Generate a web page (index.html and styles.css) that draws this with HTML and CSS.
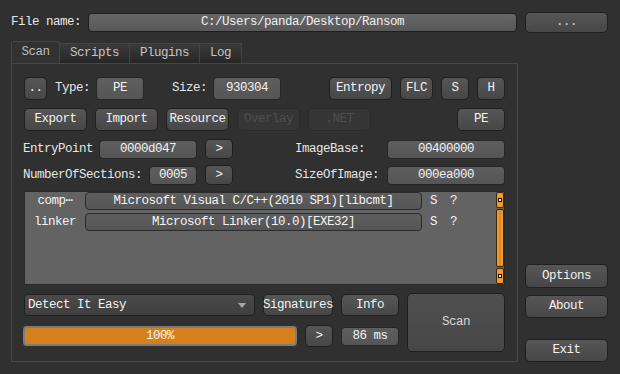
FILE: index.html
```html
<!DOCTYPE html>
<html>
<head>
<meta charset="utf-8">
<link rel="stylesheet" href="styles.css">
</head>
<body>
<div class="app">
  <div class="top">
    <span class="lbl fn-lbl">File name:</span>
    <div class="fname">C:/Users/panda/Desktop/Ransom</div>
  </div>
  <div class="top-side"><button class="btn dots">...</button></div>

  <div class="left">
    <div class="tabs">
      <div class="tab active">Scan</div>
      <div class="tab">Scripts</div>
      <div class="tab">Plugins</div>
      <div class="tab">Log</div>
    </div>
    <div class="panel">
      <div class="row r1">
        <button class="btn w23">..</button>
        <span class="lbl ml8">Type:</span>
        <div class="val w48 ml6 h23">PE</div>
        <span class="lbl ml28">Size:</span>
        <div class="val w68 ml6 h23">930304</div>
        <button class="btn w63 mlauto">Entropy</button>
        <button class="btn w33">FLC</button>
        <button class="btn w28">S</button>
        <button class="btn w28">H</button>
      </div>
      <div class="row r2">
        <button class="btn w63">Export</button>
        <button class="btn w63">Import</button>
        <button class="btn w63">Resource</button>
        <button class="btn w63 off">Overlay</button>
        <button class="btn w63 off">.NET</button>
        <button class="btn w48 mlauto">PE</button>
      </div>
      <div class="row r3">
        <div class="half">
          <span class="lbl">EntryPoint</span>
          <div class="val f w98 mlauto">0000d047</div>
          <button class="btn arrow">&gt;</button>
        </div>
        <div class="half2">
          <span class="lbl">ImageBase:</span>
          <div class="val f w118 mlauto">00400000</div>
        </div>
      </div>
      <div class="row r4">
        <div class="half">
          <span class="lbl">NumberOfSections:</span>
          <div class="val f w48 mlauto">0005</div>
          <button class="btn arrow">&gt;</button>
        </div>
        <div class="half2">
          <span class="lbl">SizeOfImage:</span>
          <div class="val f w118 mlauto">000ea000</div>
        </div>
      </div>
      <div class="list">
        <div class="items">
          <div class="item">
            <span class="ilbl">comp⋯</span>
            <div class="ival">Microsoft Visual C/C++(2010 SP1)[libcmt]</div>
            <span class="flag s">S</span>
            <span class="flag q">?</span>
          </div>
          <div class="item">
            <span class="ilbl">linker</span>
            <div class="ival">Microsoft Linker(10.0)[EXE32]</div>
            <span class="flag s">S</span>
            <span class="flag q">?</span>
          </div>
        </div>
        <div class="sbar">
          <div class="sb-end"><i></i></div>
          <div class="sb-handle"></div>
          <div class="sb-end"><i></i></div>
        </div>
      </div>
      <div class="bottom">
        <div class="bleft">
          <div class="brow">
            <div class="combo">
              <span>Detect It Easy</span>
              <svg class="caret" width="8" height="5" viewBox="0 0 8 5"><path d="M0 0H8L4 5Z" fill="#a8a8a8"/></svg>
            </div>
            <button class="btn w70 h22">Signatures</button>
            <button class="btn w58 h22">Info</button>
          </div>
          <div class="brow b2">
            <div class="progress"><span>100%</span></div>
            <button class="btn w28 h22">&gt;</button>
            <div class="val w58 h19">86 ms</div>
          </div>
        </div>
        <button class="btn scan">Scan</button>
      </div>
    </div>
  </div>

  <div class="side">
    <button class="btn sbtn">Options</button>
    <button class="btn sbtn about">About</button>
    <button class="btn sbtn exit">Exit</button>
  </div>
</div>
</body>
</html>
```

FILE: styles.css
```css
* { box-sizing: border-box; }
html, body {
  margin: 0;
  padding: 0;
  background: #303030;
  width: 620px;
  height: 374px;
  overflow: hidden;
}
body {
  font-family: "Liberation Mono", "DejaVu Sans Mono", monospace;
  font-size: 12.5px;
  letter-spacing: -0.5px;
  color: #e4e4e4;
}
.app {
  display: grid;
  grid-template-columns: 507px 83px;
  grid-template-rows: 21px auto;
  column-gap: 7px;
  row-gap: 8px;
  padding: 12px 0 0 11px;
}
.top {
  display: flex;
  align-items: center;
}
.fn-lbl { width: 77px; }
.fname {
  width: 429px;
  height: 19px;
  border: 1px solid #1e1e1e;
  border-radius: 4px;
  background: linear-gradient(#666666, #585858);
  color: #f0f0f0;
  display: flex;
  align-items: center;
  justify-content: center;
  line-height: 1;
}
.top-side { display: flex; }
.lbl { white-space: nowrap; color: #e6e6e6; line-height: 1; }

.btn {
  font-family: inherit;
  font-size: 12.5px;
  letter-spacing: -0.5px;
  color: #f2f2f2;
  background: linear-gradient(#565656, #474747);
  border: 1px solid #1f1f1f;
  border-radius: 5px;
  height: 23px;
  padding: 0;
  display: flex;
  align-items: center;
  justify-content: center;
  flex: none;
  line-height: 1;
}
.dots { width: 83px; height: 21px; color: #cfcfcf; }
.btn.off {
  background: #363636;
  border-color: #292929;
  color: #4e4e4e;
}
.val {
  background: linear-gradient(#5e5e5e, #555555);
  border: 1px solid #262626;
  border-radius: 4px;
  color: #f2f2f2;
  display: flex;
  align-items: center;
  justify-content: center;
  flex: none;
  line-height: 1;
}
.val.f { height: 19px; }
.h23 { height: 23px; }
.h22 { height: 22px; }
.h19 { height: 19px; }
.w23 { width: 23px; }
.w28 { width: 28px; }
.w33 { width: 33px; }
.w48 { width: 48px; }
.w58 { width: 58px; }
.w63 { width: 63px; }
.w68 { width: 68px; }
.w70 { width: 70px; }
.w98 { width: 98px; }
.w118 { width: 118px; }
.ml6 { margin-left: 6px; }
.ml8 { margin-left: 8px; }
.ml28 { margin-left: 28px; }
.mlauto { margin-left: auto; }

.left { display: flex; flex-direction: column; }
.tabs { display: flex; align-items: flex-end; height: 22px; }
.tab {
  height: 20px;
  padding: 0 10px;
  border: 1px solid #444444;
  border-left: none;
  border-bottom: none;
  background: linear-gradient(#3b3b3b, #262626);
  color: #c4c4c4;
  display: flex;
  align-items: center;
  line-height: 1;
}
.tab.active {
  height: 22px;
  border-left: 1px solid #474747;
  border-radius: 3px 3px 0 0;
  background: #323232;
  color: #bdbdbd;
  width: 49px;
  justify-content: center;
}
.panel {
  height: 299px;
  border: 1px solid #474747;
  padding: 13px 12px 0 12px;
  display: flex;
  flex-direction: column;
}
.row { display: flex; align-items: center; }
.r1 { height: 23px; }
.r1 .btn + .btn { margin-left: 8px; }
.r1 .btn.mlauto { margin-left: auto; }
.r2 { height: 23px; margin-top: 8px; gap: 8px; }
.r3 { height: 20px; margin-top: 8px; }
.r4 { height: 20px; margin-top: 6px; }
.half { display: flex; align-items: center; width: 210px; gap: 8px; margin-left: -1px; }
.half .lbl { margin-right: -8px; }
.half2 { display: flex; align-items: center; margin-left: 62px; flex: 1; }
.arrow { width: 28px; height: 20px; }

.list {
  margin-top: 6px;
  height: 94px;
  background: #636363;
  border: 1px solid #2a2a2a;
  display: flex;
}
.items { flex: 1; display: flex; flex-direction: column; gap: 3px; }
.item { display: flex; align-items: center; height: 18px; }
.ilbl { width: 60px; text-align: center; color: #f4f4f4; line-height: 1; }
.ival {
  width: 337px;
  height: 18px;
  background: linear-gradient(#5e5e5e, #555555);
  border: 1px solid #2b2b2b;
  border-radius: 4px;
  display: flex;
  align-items: center;
  justify-content: center;
  color: #f4f4f4;
  line-height: 1;
}
.flag { color: #f4f4f4; line-height: 1; }
.flag.s { margin-left: 8px; }
.flag.q { margin-left: 13px; }
.sbar {
  width: 8px;
  display: flex;
  flex-direction: column;
  gap: 1px;
}
.sb-end {
  height: 16px;
  background: #f29a30;
  border: 1px solid #3a2608;
  border-radius: 2px;
  display: flex;
  align-items: center;
  justify-content: center;
}
.sb-end i {
  display: block;
  width: 4px;
  height: 4px;
  background: #fff3dc;
  border: 1px solid #111;
}
.sb-handle {
  flex: 1;
  background: linear-gradient(90deg, #f5a23c, #e08620 50%, #f5a23c);
  border: 1px solid #3a2608;
  border-radius: 2px;
}

.bottom {
  margin-top: 8px;
  display: flex;
  gap: 8px;
  height: 59px;
}
.bleft { width: 375px; display: flex; flex-direction: column; gap: 9px; padding-top: 1px; }
.brow { display: flex; align-items: center; gap: 8px; height: 22px; }
.combo {
  width: 231px;
  height: 22px;
  border: 1px solid #1f1f1f;
  border-radius: 4px;
  background: linear-gradient(#4a4a4a, #3f3f3f);
  display: flex;
  align-items: center;
  padding: 0 6px 0 3px;
  color: #f2f2f2;
  line-height: 1;
}
.combo span { flex: 1; }
.caret { flex: none; margin-right: 2px; }
.progress {
  width: 274px;
  margin-left: -1px;
  height: 20px;
  border: 2px solid #7c7c7c;
  border-radius: 4px;
  background: #d6801b;
  display: flex;
  align-items: center;
  justify-content: center;
  color: #f6f6f6;
  line-height: 1;
}
.scan {
  width: 98px;
  height: 59px;
  background: linear-gradient(#4f4f4f, #474747);
  color: #d8d8d8;
}

.side {
  display: flex;
  flex-direction: column;
  justify-content: flex-end;
  height: 321px;
}
.sbtn { width: 83px; height: 24px; }
.about { margin-top: 7px; height: 23px; }
.exit { margin-top: 21px; height: 23px; }
```
